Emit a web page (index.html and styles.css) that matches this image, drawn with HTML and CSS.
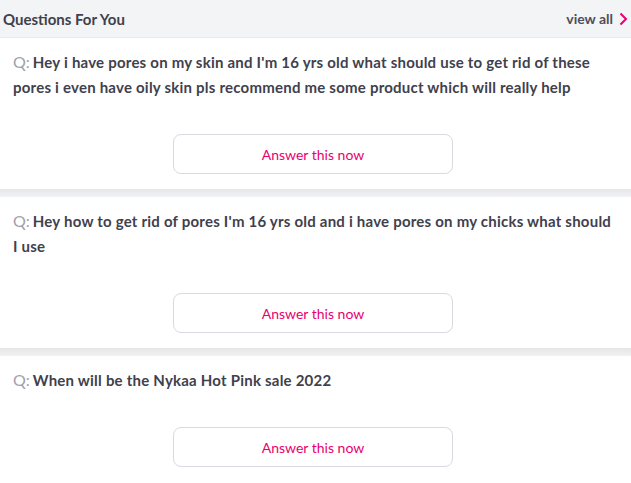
FILE: index.html
```html
<!DOCTYPE html>
<html>
<head>
<meta charset="utf-8">
<link rel="stylesheet" href="styles.css">
</head>
<body>
<div class="page">
  <div class="header">
    <span class="title">Questions For You</span>
    <a class="view-all">view all
      <svg width="9" height="14" viewBox="0 0 9 14"><path d="M1.5 1.5 L7 7 L1.5 12.5" fill="none" stroke="#e80071" stroke-width="2"/></svg>
    </a>
  </div>
  <div class="card">
    <p class="question"><span class="q">Q:</span><span class="text">Hey i have pores on my skin and I'm 16 yrs old what should use to get rid of these pores i even have oily skin pls recommend me some product which will really help</span></p>
    <button class="answer">Answer this now</button>
  </div>
  <div class="sep"></div>
  <div class="card">
    <p class="question"><span class="q">Q:</span><span class="text">Hey how to get rid of pores I'm 16 yrs old and i have pores on my chicks what should I use</span></p>
    <button class="answer">Answer this now</button>
  </div>
  <div class="sep"></div>
  <div class="card">
    <p class="question"><span class="q">Q:</span><span class="text">When will be the Nykaa Hot Pink sale 2022</span></p>
    <button class="answer">Answer this now</button>
  </div>
</div>
</body>
</html>
```
FILE: styles.css
```css
* { box-sizing: border-box; }
body { margin: 0; background: #fff; font-family: Lato, "Open Sans", sans-serif; color: #3f414d; }
.page { width: 631px; }
.header {
  height: 38px;
  background: #f3f4f6;
  border-bottom: 1px solid #e9eaee;
  display: flex;
  align-items: center;
  justify-content: space-between;
  padding: 0 3px 0 3px;
}
.title { font-size: 15px; font-weight: 700; color: #3f414d; }
.view-all { font-size: 14px; font-weight: 700; color: #4c4f5c; display: flex; align-items: center; gap: 6px; }
.card { padding: 12px 13px 15px 13px; display: flex; flex-direction: column; align-items: center; }
.question { margin: 0 0 34px; width: 100%; font-size: 15px; line-height: 25px; font-weight: 700; color: #3f414d; letter-spacing: 0.22px; }
.q { display: inline-block; font-weight: 400; color: #9fa1a8; font-size: 16px; margin-right: 3px; letter-spacing: 0; line-height: 20px; }
.answer {
  width: 280px; height: 40px; margin-right: 5px;
  border: 1px solid #d9dadf; border-radius: 8px; background: #fff;
  color: #e80071; font-family: Lato, "Open Sans", sans-serif; font-size: 14px;
}
.sep { height: 8px; background: linear-gradient(#e6e6e8, #f1f2f4); }
```
